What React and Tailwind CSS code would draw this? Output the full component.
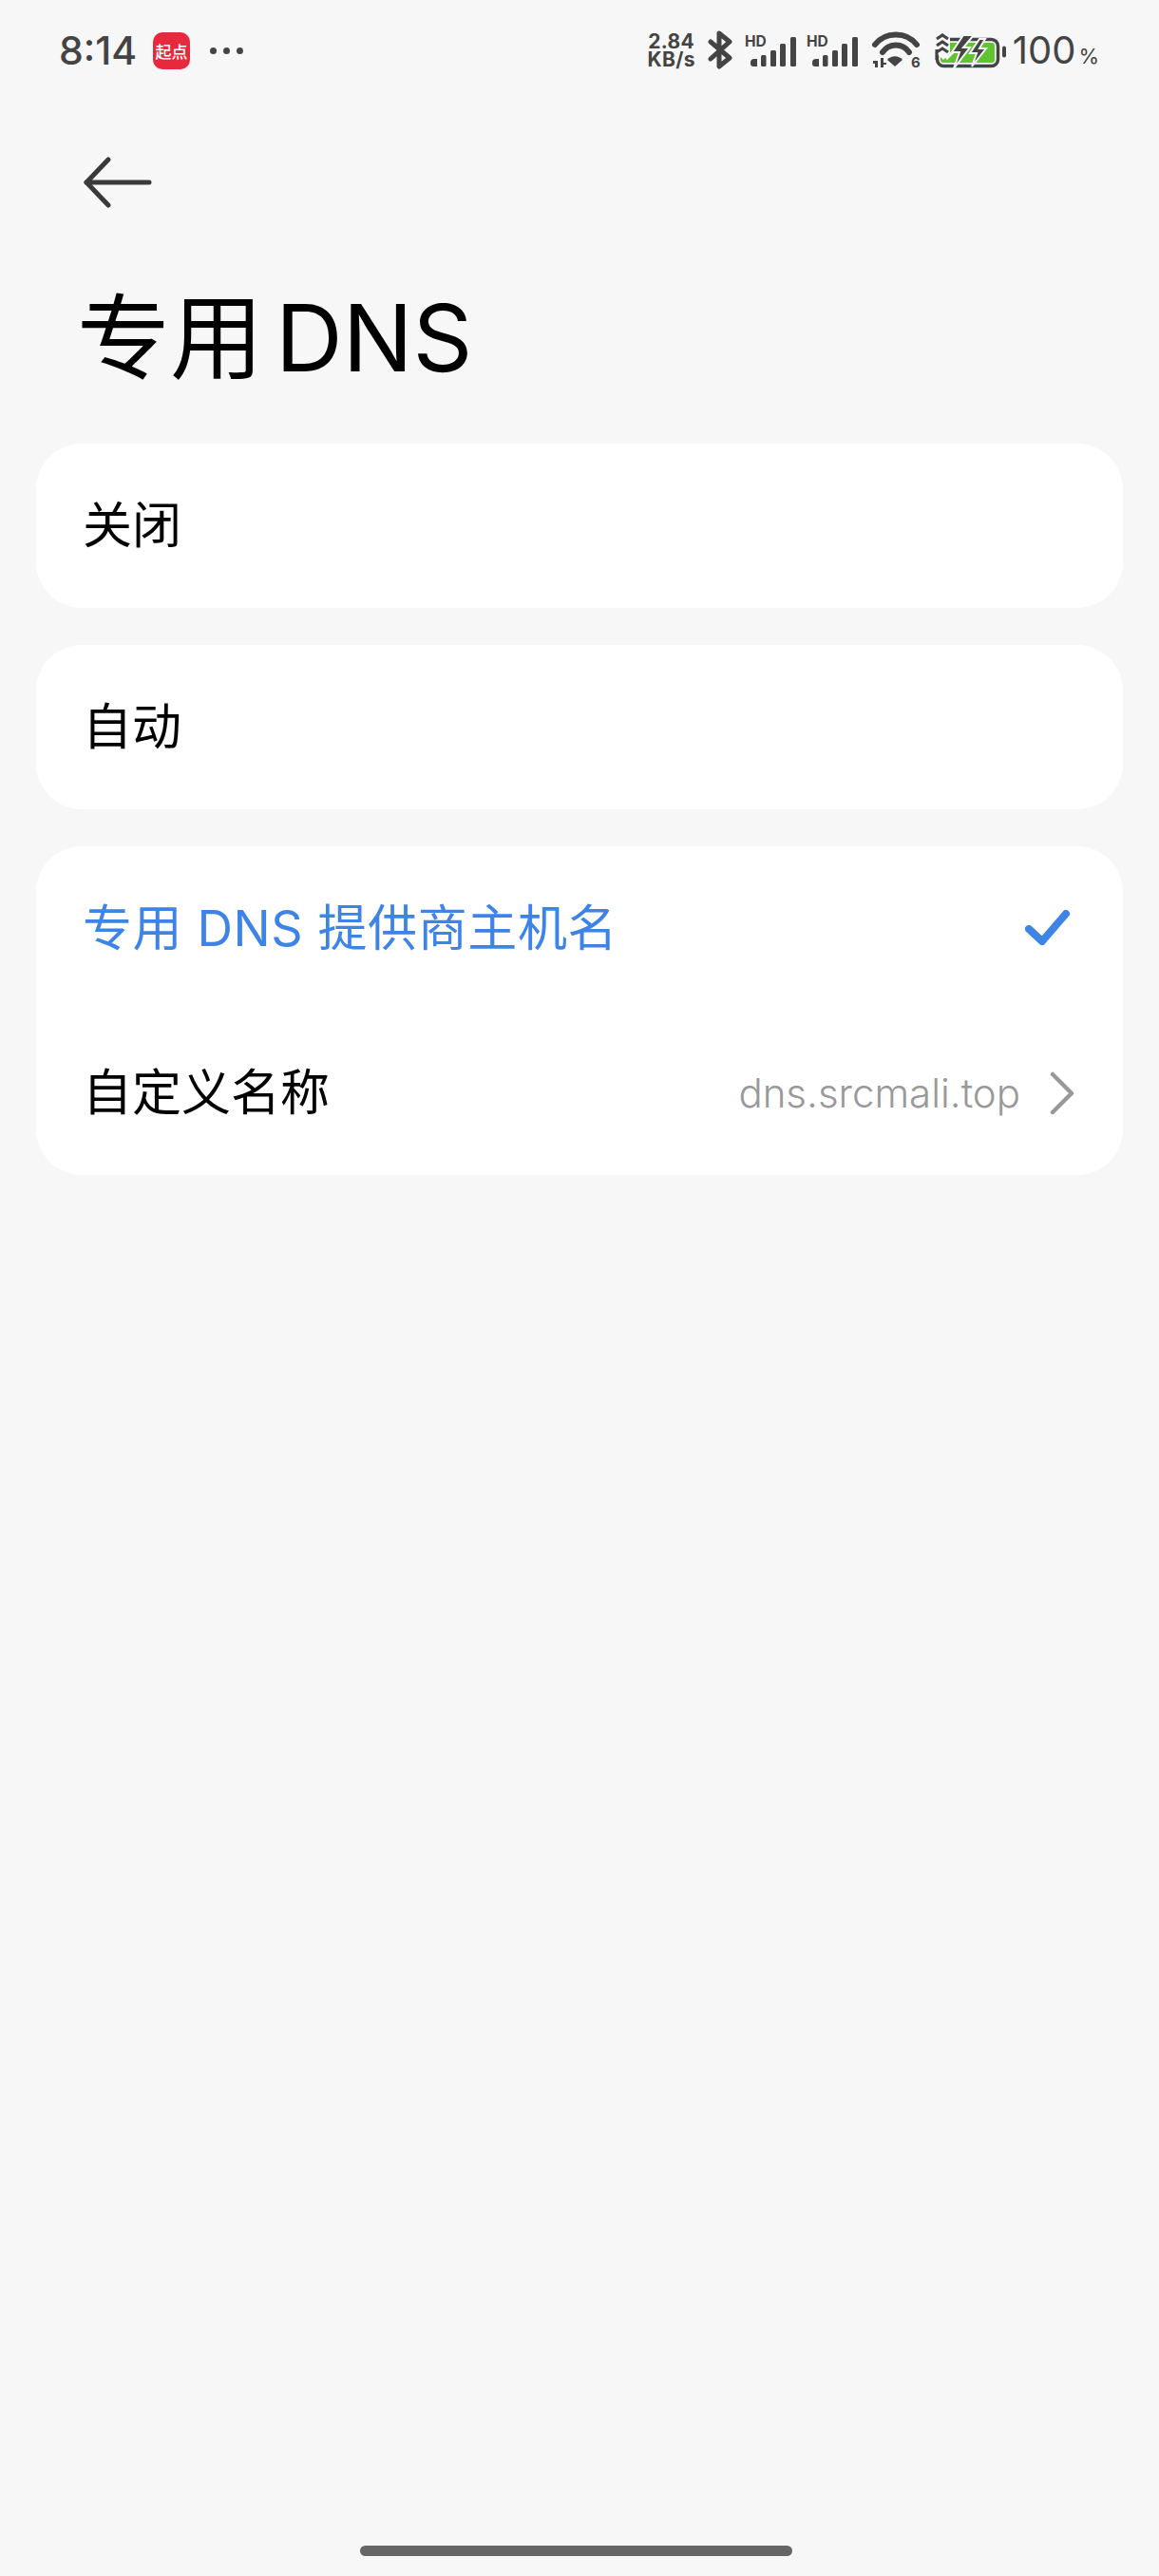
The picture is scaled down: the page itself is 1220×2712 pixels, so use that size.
const sans = "font-['Inter','Noto_Sans_CJK_SC',sans-serif]";

function Signal() {
  return (
    <svg width="54" height="36" viewBox="0 0 54 36" fill="#444" className="block overflow-visible">
      <text x="0" y="14" fontFamily="Inter, sans-serif" fontWeight="700" fontSize="15.5" fill="#444">HD</text>
      <path d="M6 31 a4 4 0 0 1 4-4 h3 v8 h-4 a3 3 0 0 1-3-3z" />
      <rect x="17" y="23" width="5.5" height="12" rx="1.5" />
      <rect x="27" y="18" width="6" height="17" rx="1.5" />
      <rect x="37" y="11" width="6" height="24" rx="1.5" />
      <rect x="48" y="4" width="6" height="31" rx="1.5" />
    </svg>
  );
}

function StatusIcons() {
  return (
    <div className="flex items-center text-[#444]">
      <div className="flex flex-col items-center text-[21px] font-bold leading-[19px] tracking-[0.3px] w-[52px] font-['Inter',sans-serif]">
        <span>2.84</span>
        <span>KB/s</span>
      </div>
      <svg width="26" height="44" viewBox="0 0 26 44" fill="none" stroke="#444" strokeWidth="5" strokeLinejoin="round" strokeLinecap="round" className="ml-[12px]">
        <path d="M3 13 L23 30 L12 39 V4 L23 13 L3 31" />
      </svg>
      <div className="ml-[13px]"><Signal /></div>
      <div className="ml-[11px]"><Signal /></div>
      <svg width="52" height="40" viewBox="0 0 52 40" fill="#444" className="ml-[15px] overflow-visible">
        <path d="M3 14 C14 0 36 0 47 14" fill="none" stroke="#444" strokeWidth="6" strokeLinecap="round" />
        <path d="M11 22 C18 12 32 12 39 22" fill="none" stroke="#444" strokeWidth="6" strokeLinecap="round" />
        <path d="M16 30 C20 25 28 25 32 30 L24 37 Z" />
        <path d="M1 31 h5 V38 H3 v-4 h-2z M9 28 h3 v5 h3 v2 h-3 v3 h-3z" />
        <text x="41" y="38" fontFamily="Inter, sans-serif" fontWeight="700" fontSize="15" fill="#444">6</text>
      </svg>
      <svg width="76" height="38" viewBox="0 0 76 38" className="ml-[14px]">
        <rect x="2.5" y="7.5" width="64" height="28" rx="7" fill="none" stroke="#444" strokeWidth="3.5" />
        <rect x="6" y="11" width="57" height="21" rx="3" fill="#5fc42d" />
        <path d="M0 4 H16 V22 L9 29 L0 20 Z" fill="#f7f7f7" />
        <path d="M2 7 L8 3 L14 7 M2 14 L8 10 L14 14" fill="none" stroke="#444" strokeWidth="3.2" />
        <path d="M2 18 V29 M2 21 L8 17 L14 21" fill="none" stroke="#444" strokeWidth="3" />
        <path d="M9 22 L13 27 L20 20" fill="none" stroke="#f7f7f7" strokeWidth="3" />
        <path d="M30 3 L18 21 H26 L20 38 L37 16 H30 L41 3 Z" fill="#444" stroke="#f7f7f7" strokeWidth="2" />
        <path d="M47 7 L37 22 H44 L39 36 L54 17 H47 L53 7 Z" fill="#444" stroke="#f7f7f7" strokeWidth="2" />
        <rect x="71" y="14.5" width="4" height="12" rx="2" fill="#444" />
      </svg>
      <div className="ml-[6px] flex items-baseline font-['Inter',sans-serif]">
        <span className="text-[40px] leading-none">100</span>
        <span className="text-[22px] leading-none ml-[3px]">%</span>
      </div>
    </div>
  );
}

function Row({ label, blue, children }) {
  return (
    <div className="h-[173px] flex items-center justify-between pl-[49px] pr-[50px]">
      <span className={`text-[52px] leading-none ${blue ? "text-[#3d84e6] tracking-[0.6px]" : "text-black"}`}>{label}</span>
      {children}
    </div>
  );
}

export default function App() {
  return (
    <div className={`w-[1220px] h-[2712px] bg-[#f7f7f7] flex flex-col ${sans}`}>
      <div className="h-[104px] flex items-center justify-between pl-[62px] pr-[63px] pt-[2px] shrink-0">
        <div className="flex items-center">
          <span className="text-[41px] font-medium leading-none text-[#444] w-[99px]">8:14</span>
          <div className="w-[39px] h-[39px] rounded-[10px] bg-[#e8283c] text-white text-[17px] font-medium flex items-center justify-center leading-none font-['Noto_Sans_CJK_SC',sans-serif]">起点</div>
          <div className="ml-[21px] flex gap-[7px]">
            <span className="w-[7px] h-[7px] rounded-full bg-[#444]" />
            <span className="w-[7px] h-[7px] rounded-full bg-[#444]" />
            <span className="w-[7px] h-[7px] rounded-full bg-[#444]" />
          </div>
        </div>
        <StatusIcons />
      </div>

      <div className="pl-[88px] pt-[61px] h-[96px] shrink-0">
        <svg width="72" height="54" viewBox="0 0 72 54" fill="none" stroke="#3a3a3a" strokeWidth="5" strokeLinecap="round" strokeLinejoin="round" className="block">
          <path d="M3 27 H69" />
          <path d="M26 3 L3 27 L26 51" />
        </svg>
      </div>

      <h1 className="pl-[81px] mt-[95px] text-[98px] font-normal leading-none h-[172px] text-black shrink-0 pt-[12px]">专用<span className="ml-[13px]">DNS</span></h1>

      <div className="flex flex-col gap-[39px] mx-[38px]">
        <div className="rounded-[48px] bg-white"><Row label="关闭" /></div>
        <div className="rounded-[48px] bg-white"><Row label="自动" /></div>
        <div className="rounded-[48px] bg-white">
          <Row label="专用 DNS 提供商主机名" blue>
            <svg width="48" height="40" viewBox="0 0 48 40" fill="none" stroke="#3d84e6" strokeWidth="8" strokeLinecap="round" strokeLinejoin="round" className="mr-[5px]">
              <path d="M4 20 L18 33 L43 4" />
            </svg>
          </Row>
          <Row label="自定义名称">
            <div className="flex items-center">
              <span className="text-[42px] font-light leading-none text-[#999]">dns.srcmali.top</span>
              <svg width="26" height="46" viewBox="0 0 26 46" fill="none" stroke="#999" strokeWidth="4.5" strokeLinecap="round" strokeLinejoin="round" className="ml-[31px] mr-[1px]">
                <path d="M3 3 L23 23 L3 43" />
              </svg>
            </div>
          </Row>
        </div>
      </div>

      <div className="mt-auto mb-[21px] ml-[379px] w-[455px] h-[11px] rounded-full bg-[#666] shrink-0" />
    </div>
  );
}
